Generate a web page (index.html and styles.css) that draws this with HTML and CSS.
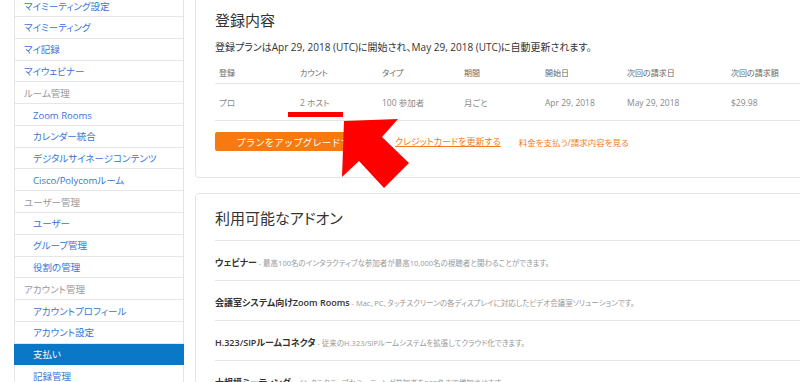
FILE: index.html
```html
<!DOCTYPE html>
<html lang="ja">
<head>
    <meta charset="UTF-8">
    <title>支払い</title>
    <link rel="stylesheet" href="styles.css">
</head>
<body>
    <div class="page">
        <ul class="sidebar">
            <li><a>マイミーティング設定</a></li>
            <li><a>マイミーティング</a></li>
            <li><a>マイ記録</a></li>
            <li><a>マイウェビナー</a></li>
            <li class="group">ルーム管理</li>
            <li class="sub"><a>Zoom Rooms</a></li>
            <li class="sub"><a>カレンダー統合</a></li>
            <li class="sub"><a>デジタルサイネージコンテンツ</a></li>
            <li class="sub"><a>Cisco/Polycomルーム</a></li>
            <li class="group">ユーザー管理</li>
            <li class="sub"><a>ユーザー</a></li>
            <li class="sub"><a>グループ管理</a></li>
            <li class="sub"><a>役割の管理</a></li>
            <li class="group">アカウント管理</li>
            <li class="sub"><a>アカウントプロフィール</a></li>
            <li class="sub"><a>アカウント設定</a></li>
            <li class="sub active"><a>支払い</a></li>
            <li class="sub"><a>記録管理</a></li>
        </ul>

        <div class="main">
            <div class="card plan">
                <h2>登録内容</h2>
                <p class="summary">登録プランはApr 29, 2018 (UTC)に開始され、May 29, 2018 (UTC)に自動更新されます。</p>

                <div class="table">
                    <div class="row head">
                        <span>登録</span>
                        <span>カウント</span>
                        <span>タイプ</span>
                        <span>期間</span>
                        <span>開始日</span>
                        <span>次回の請求日</span>
                        <span>次回の請求額</span>
                    </div>
                    <div class="row">
                        <span>プロ</span>
                        <span>2 ホスト</span>
                        <span>100 参加者</span>
                        <span>月ごと</span>
                        <span>Apr 29, 2018</span>
                        <span>May 29, 2018</span>
                        <span>$29.98</span>
                    </div>
                </div>

                <div class="actions">
                    <button class="upgrade">プランをアップグレードする</button>
                    <a class="link underline">クレジットカードを更新する</a>
                    <a class="link">料金を支払う/請求内容を見る</a>
                </div>
            </div>

            <div class="card addons">
                <h2>利用可能なアドオン</h2>
                <div class="addon"><b>ウェビナー</b><span> - 最高100名のインタラクティブな参加者が最高10,000名の視聴者と関わることができます。</span></div>
                <div class="addon"><b>会議室システム向けZoom Rooms</b><span> - Mac、PC、タッチスクリーンの各ディスプレイに対応したビデオ会議室ソリューションです。</span></div>
                <div class="addon"><b>H.323/SIPルームコネクタ</b><span> - 従来のH.323/SIPルームシステムを拡張してクラウド化できます。</span></div>
                <div class="addon"><b>大規模ミーティング</b><span> - インタラクティブなミーティング参加者を500名まで増加させます。</span></div>
            </div>
        </div>
    </div>

    <!-- 注釈（赤線と矢印） -->
    <svg class="marks" width="800" height="382" viewBox="0 0 800 382">
        <rect x="288" y="112" width="55" height="5" fill="#f00"/>
        <polygon points="344,121 398,119 382,137 409,163 384,188 359,161 342,177" fill="#f00"/>
    </svg>
</body>
</html>
```

FILE: styles.css
```css
html, body {
    margin: 0;
    overflow: hidden;
    background: #fff;
}
body {
    font-family: "Open Sans", "Noto Sans CJK JP", sans-serif;
    font-feature-settings: "palt";
    color: #333;
}
.page {
    display: flex;
    align-items: flex-start;
    padding-left: 14px;
}
.sidebar {
    list-style: none;
    margin: -4.8px 0 0 0;
    padding: 0;
    width: 168px;
    flex: none;
    border-left: 1px solid #e4e4e4;
    border-right: 1px solid #e4e4e4;
}
.sidebar li {
    height: 18.4px;
    line-height: 18.4px;
    padding-top: 2.4px;
    border-bottom: 1px solid #e6e6e6;
    padding-left: 9px;
    font-size: 9.5px;
    color: #999;
    white-space: nowrap;
}
.sidebar li a {
    color: #3574d6;
}
.sidebar li.sub {
    padding-left: 18px;
}
.sidebar li.active {
    background: #0a78c6;
    margin: 0 -1px;
    padding-left: 19px;
    border-bottom-color: #0a78c6;
}
.sidebar li.active a {
    color: #fff;
}
.main {
    margin-left: 11px;
    width: 660px;
    flex: none;
}
.card {
    border: 1px solid #e6e6e6;
    border-radius: 4px;
    padding: 13px 0 0 19px;
    background: #fff;
}
.card h2 {
    margin: 0;
    font-size: 15px;
    line-height: 22px;
    font-weight: normal;
    color: #333;
}
.plan {
    margin-top: -5px;
    padding-bottom: 26px;
}
.summary {
    margin: 8px 0 0 0;
    font-size: 10px;
    line-height: 16px;
}
.table {
    margin-top: 7px;
}
.row {
    display: grid;
    grid-template-columns: 81px 82px 82px 81px 82px 104px 1fr;
    height: 36px;
    align-items: center;
    border-bottom: 1px solid #e6e6e6;
    font-size: 8.5px;
    color: #888;
}
.row span {
    padding-left: 4px;
    white-space: nowrap;
}
.row.head {
    height: 21px;
    font-size: 8px;
    color: #666;
}
.actions {
    display: flex;
    align-items: center;
    margin-top: 11px;
}
.upgrade {
    height: 19px;
    width: 166px;
    padding: 0;
    border: none;
    border-radius: 2px;
    background: #f7790f;
    color: #fff;
    font-family: inherit;
    font-size: 9.5px;
}
.link {
    color: #f47a20;
    font-size: 9px;
    margin-left: 14px;
}
.link + .link {
    margin-left: 18px;
    font-size: 8.5px;
}
.link.underline {
    text-decoration: underline;
}
.addons {
    margin-top: 15px;
}
.addons h2 {
    padding-bottom: 11px;
    border-bottom: 1px solid #e6e6e6;
}
.addon {
    height: 39px;
    line-height: 39px;
    border-bottom: 1px solid #e6e6e6;
    white-space: nowrap;
}
.addon b {
    font-size: 9px;
    font-weight: 600;
    color: #333;
}
.addon span {
    font-size: 7.5px;
    color: #999;
}
.marks {
    position: absolute;
    top: 0;
    left: 0;
}
```
